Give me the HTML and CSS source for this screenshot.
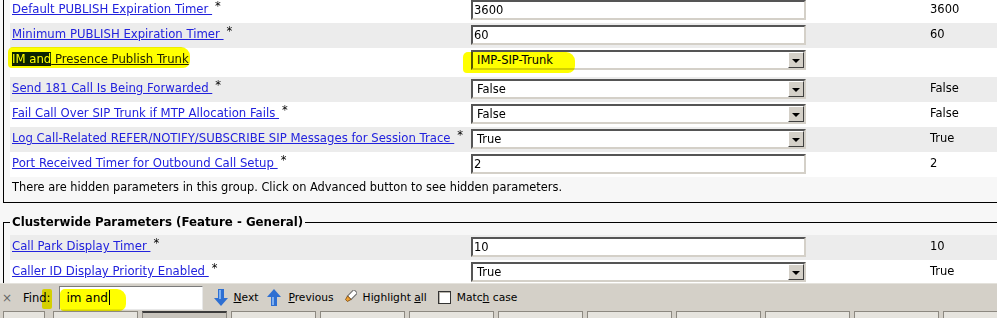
FILE: index.html
```html
<!DOCTYPE html>
<html lang="en">
<head>
    <meta charset="UTF-8">
    <title>Service Parameter Configuration</title>
    <link rel="stylesheet" href="styles.css">
</head>
<body>
    <div class="viewport">
        <div class="content">
            <fieldset class="group first">
                <div class="row">
                    <div class="label"><a href="#">Default PUBLISH Expiration Timer </a><span class="req">*</span></div>
                    <div class="control"><input class="field" type="text" value="3600"></div>
                    <div class="default">3600</div>
                </div>
                <div class="row alt">
                    <div class="label"><a href="#">Minimum PUBLISH Expiration Timer </a><span class="req">*</span></div>
                    <div class="control"><input class="field" type="text" value="60"></div>
                    <div class="default">60</div>
                </div>
                <div class="row tall">
                    <div class="label"><a href="#"><span class="found">IM and</span> Presence Publish Trunk</a><span class="marker mark-label"></span></div>
                    <div class="control">
                        <div class="select"><span>IMP-SIP-Trunk</span><span class="arrow"></span></div>
                        <span class="marker mark-select"></span>
                    </div>
                    <div class="default"></div>
                </div>
                <div class="row alt">
                    <div class="label"><a href="#">Send 181 Call Is Being Forwarded </a><span class="req">*</span></div>
                    <div class="control"><div class="select"><span>False</span><span class="arrow"></span></div></div>
                    <div class="default">False</div>
                </div>
                <div class="row">
                    <div class="label"><a href="#">Fail Call Over SIP Trunk if MTP Allocation Fails </a><span class="req">*</span></div>
                    <div class="control"><div class="select"><span>False</span><span class="arrow"></span></div></div>
                    <div class="default">False</div>
                </div>
                <div class="row alt">
                    <div class="label"><a href="#">Log Call-Related REFER/NOTIFY/SUBSCRIBE SIP Messages for Session Trace </a><span class="req">*</span></div>
                    <div class="control"><div class="select"><span>True</span><span class="arrow"></span></div></div>
                    <div class="default">True</div>
                </div>
                <div class="row">
                    <div class="label"><a href="#">Port Received Timer for Outbound Call Setup </a><span class="req">*</span></div>
                    <div class="control"><input class="field" type="text" value="2"></div>
                    <div class="default">2</div>
                </div>
                <div class="note">There are hidden parameters in this group. Click on Advanced button to see hidden parameters.</div>
            </fieldset>

            <fieldset class="group">
                <legend>Clusterwide Parameters (Feature - General)</legend>
                <div class="row alt">
                    <div class="label"><a href="#">Call Park Display Timer </a><span class="req">*</span></div>
                    <div class="control"><input class="field" type="text" value="10"></div>
                    <div class="default">10</div>
                </div>
                <div class="row">
                    <div class="label"><a href="#">Caller ID Display Priority Enabled </a><span class="req">*</span></div>
                    <div class="control"><div class="select"><span>True</span><span class="arrow"></span></div></div>
                    <div class="default">True</div>
                </div>
            </fieldset>
        </div>

        <div class="findbar">
            <span class="close">×</span>
            <span class="find-label">Find:</span>
            <div class="find-input">im and<span class="caret"></span></div>
            <span class="btn btn-next">
                <svg width="14" height="17" viewBox="0 0 14 17"><path d="M4 0h6v9h4l-7 8-7-8h4z" fill="#2e6fd2"/><path d="M5 1h2v9H5z" fill="#7fb0f0"/></svg>
                <span><u>N</u>ext</span>
            </span>
            <span class="btn btn-prev">
                <svg width="14" height="17" viewBox="0 0 14 17"><path d="M7 0l7 8h-4v9H4V8H0z" fill="#2e6fd2"/><path d="M5 8h2v8H5z" fill="#7fb0f0"/></svg>
                <span><u>P</u>revious</span>
            </span>
            <span class="btn btn-all">
                <svg width="14" height="15" viewBox="0 0 14 15"><g transform="rotate(45 7 7)"><rect x="4.5" y="-1" width="5" height="9" fill="#fff" stroke="#6a6a6a"/><path d="M4.5 8h5l-1.2 4h-2.6z" fill="#f0a030" stroke="#7a4a10" stroke-width="0.8"/></g></svg>
                <span>Highlight <u>a</u>ll</span>
            </span>
            <span class="btn btn-case">
                <span class="check"></span>
                <span>Matc<u>h</u> case</span>
            </span>
            <span class="marker mark-find"></span>
            <span class="marker mark-input"></span>
        </div>

        <div class="tabs">
            <span class="tab first"></span>
            <span class="tab"></span>
            <span class="tab on"></span>
            <span class="tab"></span>
            <span class="tab"></span>
            <span class="tab"></span>
            <span class="tab"></span>
            <span class="tab"></span>
            <span class="tab"></span>
            <span class="tab"></span>
            <span class="tab"></span>
            <span class="tab"></span>
        </div>
    </div>
</body>
</html>
```

FILE: styles.css
```css
body {
    margin: 0;
    background-color: #f7f7f7;
    color: #000;
    font-family: "DejaVu Sans", Tahoma, Verdana, sans-serif;
    font-size: 11.5px;
    overflow: hidden;
}
.viewport {
    height: 318px;
    display: flex;
    flex-direction: column;
}
.content {
    height: 283px;
    overflow: hidden;
    flex: none;
}
.group {
    width: 1100px;
    margin: 12px 0 0 3px;
    padding: 5px 0 5px 6px;
    border: 1px solid #000;
    min-width: 0;
}
.group.first {
    border-top: none;
    margin-top: -2px;
    padding-top: 0;
}
legend {
    font-weight: bold;
    font-size: 11.8px;
    padding: 0 2px;
    line-height: 15px;
}
.row {
    display: grid;
    grid-template-columns: 461px 335px 1fr;
    height: 25px;
    background-color: #fff;
}
.row.alt {
    background-color: #ececec;
}
.row.tall {
    height: 29px;
}
.label, .default {
    padding-top: 4px;
    line-height: 15px;
}
.label {
    position: relative;
    padding-left: 2px;
    font-size: 11.7px;
}
.default {
    padding-left: 124px;
}
.control {
    position: relative;
    padding-top: 2px;
}
a {
    color: #2222dd;
    text-decoration: underline;
}
.req {
    margin-left: 3px;
    position: relative;
    top: -3px;
    font-size: 11.5px;
}
.found {
    background-color: #0a246a;
    color: #fff;
}
.field, .select {
    width: 335px;
    height: 20px;
    box-sizing: border-box;
    border: 2px solid;
    border-color: #555 #d4d0c8 #d4d0c8 #555;
    background-color: #fff;
    font-family: inherit;
    font-size: 11.5px;
    color: #000;
}
.field {
    display: block;
    padding: 0 1px;
    outline: none;
}
.select {
    display: flex;
    align-items: center;
    justify-content: space-between;
    padding-left: 4px;
}
.select .arrow {
    width: 16px;
    height: 16px;
    box-sizing: border-box;
    background-color: #d4d0c8;
    border: 1px solid;
    border-color: #fff #404040 #404040 #fff;
    display: flex;
    align-items: center;
    justify-content: center;
}
.select .arrow::after {
    content: "";
    border-left: 4px solid transparent;
    border-right: 4px solid transparent;
    border-top: 4px solid #000;
    margin-top: 1px;
}
.note {
    height: 20px;
    line-height: 20px;
    padding-left: 2px;
    font-size: 11.4px;
}

/* highlighter marks drawn over the screenshot */
.marker {
    position: absolute;
    background-color: #ffff00;
    mix-blend-mode: multiply;
    border-radius: 5px 9px 7px 4px;
    pointer-events: none;
}
.mark-label {
    left: -2px;
    top: -1px;
    width: 182px;
    height: 21px;
}
.mark-select {
    left: -8px;
    top: 4px;
    width: 112px;
    height: 21px;
}
.mark-find {
    left: 42px;
    top: 5px;
    width: 10px;
    height: 20px;
    border-radius: 2px;
}
.mark-input {
    left: 60px;
    top: 5px;
    width: 66px;
    height: 22px;
}

/* find bar */
.findbar {
    position: relative;
    height: 28px;
    flex: none;
    background-color: #d4d0c8;
    border-top: 1px solid #e4e2dc;
    box-sizing: border-box;
    display: flex;
    align-items: center;
    font-size: 10.7px;
}
.close {
    margin-left: 2px;
    color: #666;
    font-size: 12px;
}
.find-label {
    margin-left: 11px;
    font-size: 11.5px;
}
.find-input {
    margin-left: 8px;
    width: 144px;
    height: 24px;
    box-sizing: border-box;
    border: 1px solid;
    border-color: #7a7a7a #e8e8e8 #e8e8e8 #7a7a7a;
    background-color: #fff;
    padding-left: 7px;
    font-size: 12px;
    line-height: 22px;
    display: flex;
    align-items: center;
}
.caret {
    width: 1px;
    height: 15px;
    background-color: #000;
    margin-left: 1px;
}
.btn {
    display: flex;
    align-items: center;
    gap: 6px;
}
.btn svg {
    display: block;
}
.btn-next {
    margin-left: 11px;
}
.btn-prev {
    margin-left: 9px;
    gap: 7px;
}
.btn-all {
    margin-left: 9px;
}
.btn-case {
    margin-left: 11px;
}
.check {
    width: 13px;
    height: 13px;
    box-sizing: border-box;
    border: 1px solid #333;
    background-color: #fff;
    box-shadow: inset 1px 1px 0 #b8b4ac;
}

/* strip under the find bar */
.tabs {
    flex: 1;
    background-color: #d4d0c8;
    display: flex;
    gap: 4px;
    padding-left: 3px;
    overflow: hidden;
}
.tab {
    flex: none;
    width: 83px;
    border: 1px solid #8c8880;
    border-bottom: none;
    background-color: #e6e4de;
}
.tab.first {
    width: 40px;
    margin-right: 4px;
}
.tab.on {
    border-top: 2px solid #3c3c3c;
    background-color: #c8c4bc;
}
```
